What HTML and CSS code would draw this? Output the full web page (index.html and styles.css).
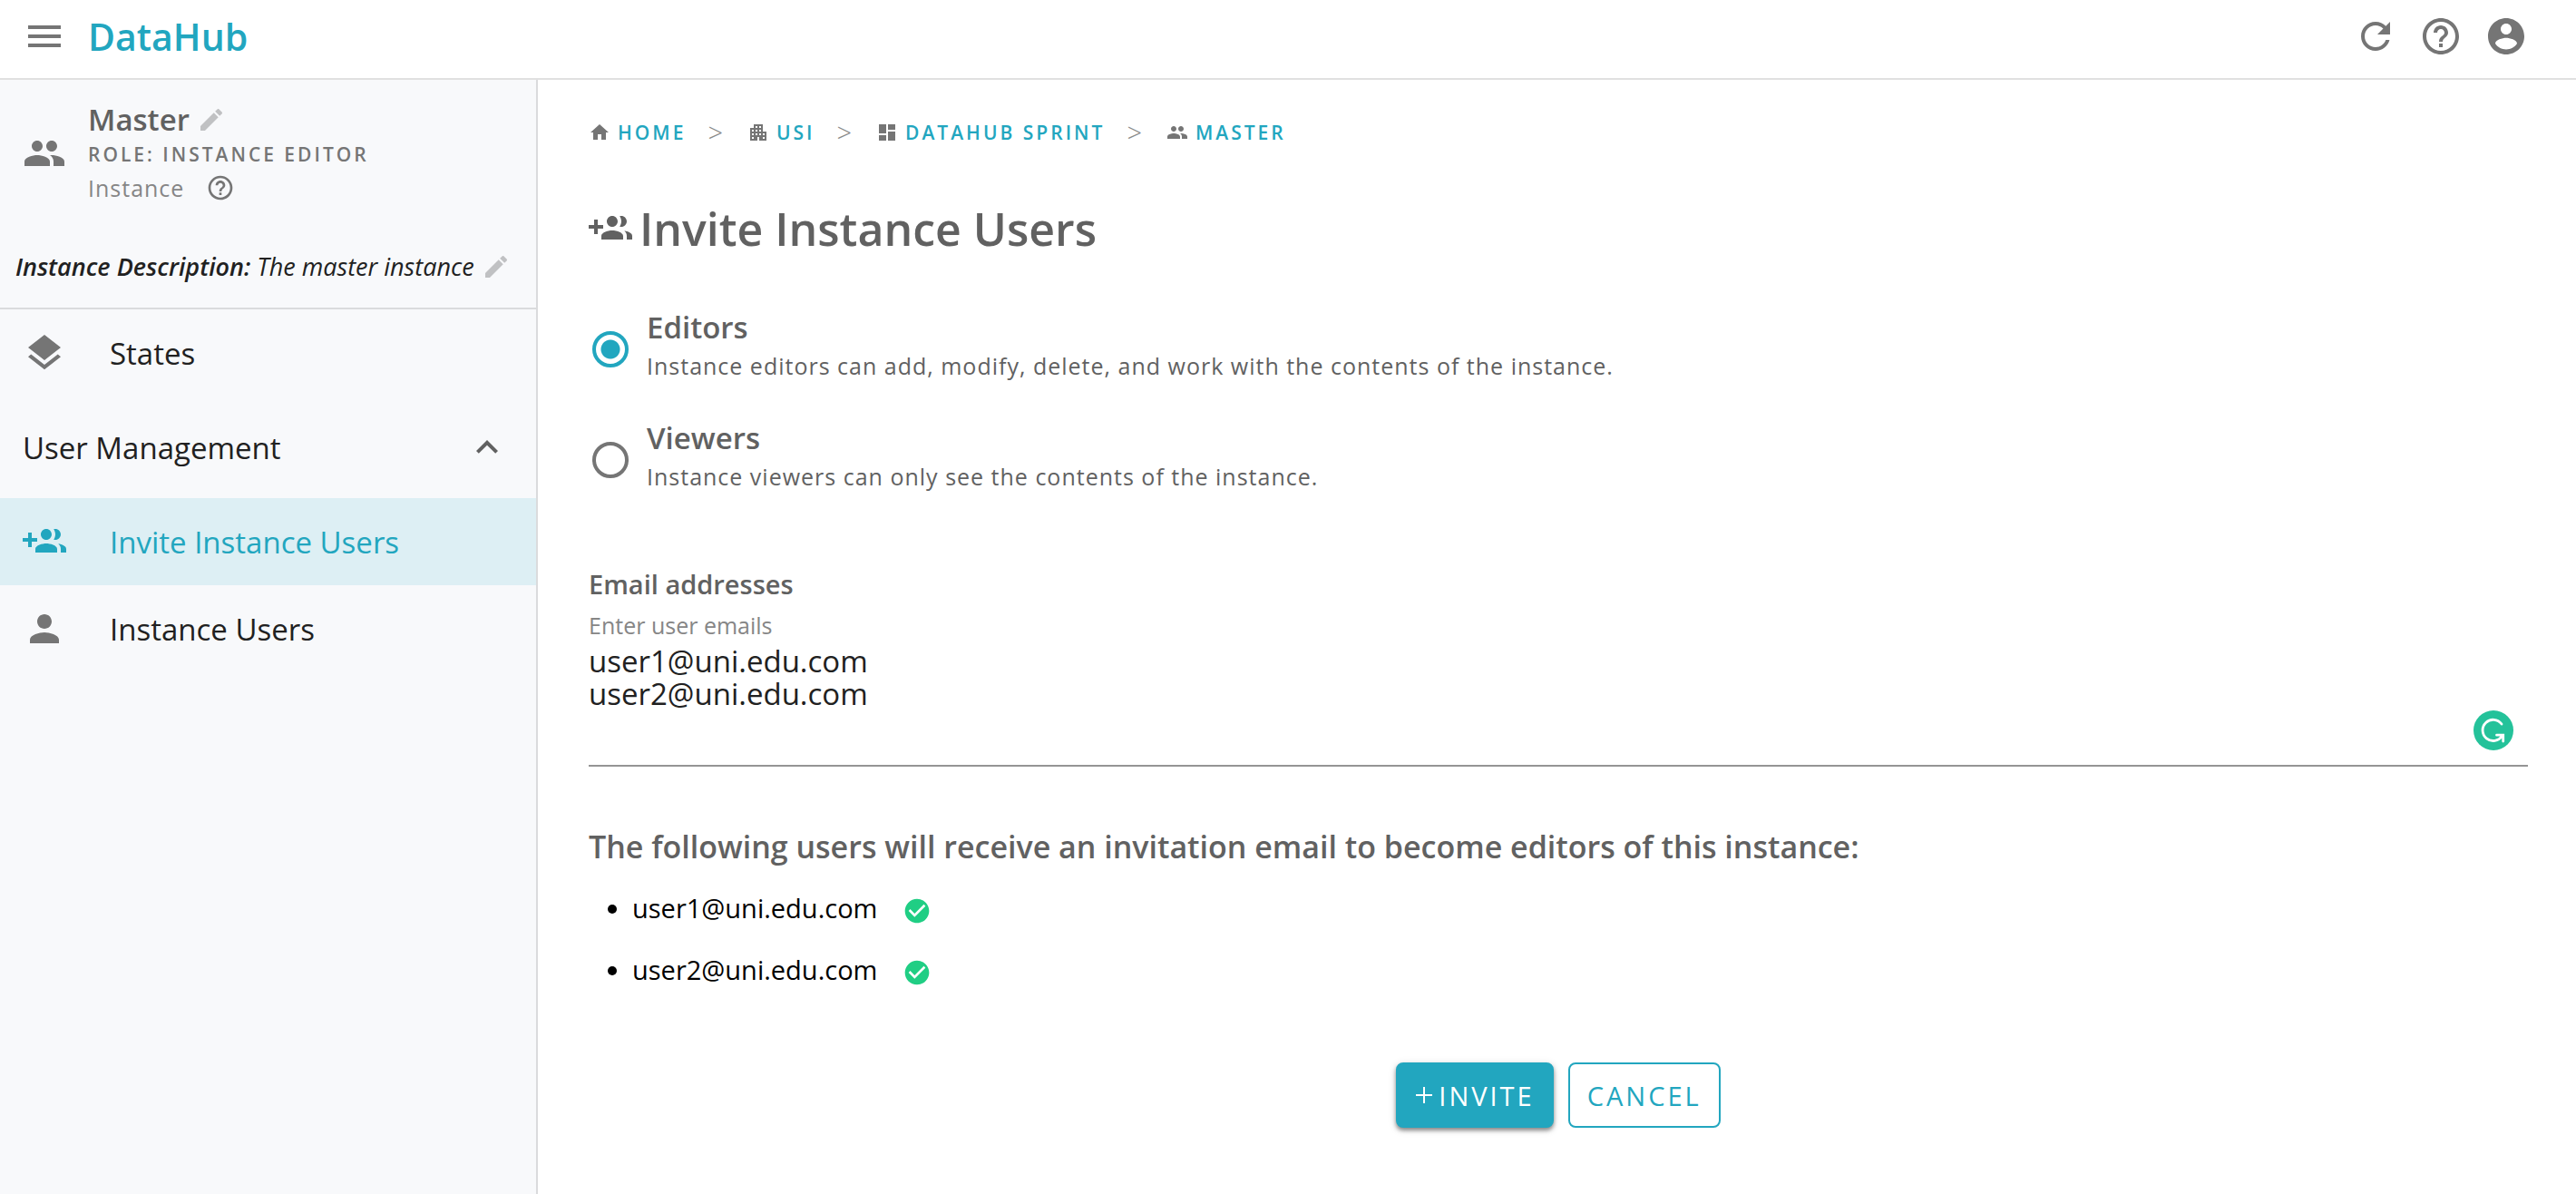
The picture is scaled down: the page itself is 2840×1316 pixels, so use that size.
FILE: index.html
```html
<!DOCTYPE html>
<html lang="en">
<head>
<meta charset="utf-8">
<title>DataHub – Invite Instance Users</title>
<link rel="stylesheet" href="styles.css">
</head>
<body>
<svg class="sprite" aria-hidden="true">
  <symbol id="people" viewBox="0 0 24 24"><path d="M16 11c1.660 0 2.990-1.340 2.990-3S17.660 5 16 5s-3 1.340-3 3 1.340 3 3 3zm-8 0c1.660 0 2.990-1.340 2.990-3S9.660 5 8 5 5 6.340 5 8s1.340 3 3 3zm0 2c-2.330 0-7 1.170-7 3.500V19h14v-2.500c0-2.330-4.670-3.500-7-3.500zm8 0c-.290 0-.620.020-.970.050 1.160.840 1.970 1.970 1.970 3.450V19h6v-2.500c0-2.330-4.670-3.500-7-3.500z"/></symbol>
  <symbol id="pencil" viewBox="0 0 24 24"><path d="M3 17.250V21h3.750L17.810 9.940l-3.750-3.750L3 17.250zM20.710 7.040c.390-.390.390-1.020 0-1.410l-2.340-2.340c-.390-.390-1.020-.390-1.410 0l-1.830 1.830 3.750 3.750 1.830-1.830z"/></symbol>
  <symbol id="help" viewBox="0 0 24 24"><path d="M11 18h2v-2h-2v2zm1-16C6.480 2 2 6.480 2 12s4.480 10 10 10 10-4.480 10-10S17.520 2 12 2zm0 18c-4.410 0-8-3.590-8-8s3.590-8 8-8 8 3.590 8 8-3.590 8-8 8zm0-14c-2.210 0-4 1.790-4 4h2c0-1.100.900-2 2-2s2 .900 2 2c0 2-3 1.750-3 5h2c0-2.250 3-2.500 3-5 0-2.210-1.790-4-4-4z"/></symbol>
  <symbol id="group-add" viewBox="0 0 24 24"><path d="M8 10H5V7H3v3H0v2h3v3h2v-3h3v-2zm10 1c1.660 0 2.990-1.340 2.990-3S19.660 5 18 5c-.320 0-.630.050-.910.140.570.810.900 1.790.900 2.860s-.340 2.040-.900 2.860c.280.090.590.140.910.140zm-5 0c1.660 0 2.990-1.340 2.990-3S14.660 5 13 5s-3 1.340-3 3 1.340 3 3 3zm6.620 2.160c.830.730 1.380 1.660 1.380 2.840v2h3v-2c0-1.540-2.370-2.490-4.380-2.840zM13 13c-2 0-6 1-6 3v2h12v-2c0-2-4-3-6-3z"/></symbol>
  <symbol id="check" viewBox="0 0 24 24"><path d="M12 2C6.480 2 2 6.480 2 12s4.480 10 10 10 10-4.480 10-10S17.520 2 12 2zm-2 15l-5-5 1.410-1.410L10 14.170l7.590-7.590L19 8l-9 9z"/></symbol>
</svg>

<header class="topbar">
  <button class="icon-button" type="button" aria-label="Menu"><svg class="icon" viewBox="0 0 24 24"><path d="M3 18h18v-2H3v2zm0-5h18v-2H3v2zm0-7v2h18V6H3z"/></svg></button>
  <a class="brand" href="#">DataHub</a>
  <div class="actions">
    <button class="icon-button" type="button" aria-label="Refresh"><svg class="icon" viewBox="0 0 24 24"><path d="M17.650 6.350C16.200 4.900 14.210 4 12 4c-4.420 0-7.990 3.580-7.990 8s3.570 8 7.990 8c3.730 0 6.840-2.550 7.730-6h-2.080c-.820 2.330-3.040 4-5.650 4-3.310 0-6-2.690-6-6s2.690-6 6-6c1.660 0 3.140.690 4.220 1.780L13 11h7V4l-2.350 2.350z"/></svg></button>
    <button class="icon-button" type="button" aria-label="Help"><svg class="icon"><use href="#help"/></svg></button>
    <button class="icon-button" type="button" aria-label="Account"><svg class="icon" viewBox="0 0 24 24"><path d="M12 2C6.480 2 2 6.480 2 12s4.480 10 10 10 10-4.480 10-10S17.520 2 12 2zm0 3c1.660 0 3 1.340 3 3s-1.340 3-3 3-3-1.340-3-3 1.340-3 3-3zm0 14.200c-2.500 0-4.710-1.280-6-3.220.030-1.990 4-3.080 6-3.080 1.990 0 5.970 1.090 6 3.080-1.290 1.940-3.500 3.220-6 3.220z"/></svg></button>
  </div>
</header>

<div class="shell">
  <aside class="sidebar">
    <section class="profile">
      <svg class="icon"><use href="#people"/></svg>
      <div class="profile-text">
        <div class="profile-name"><strong>Master</strong><button class="icon-button faint" type="button" aria-label="Edit name"><svg class="icon small"><use href="#pencil"/></svg></button></div>
        <div class="profile-role">ROLE: INSTANCE EDITOR</div>
        <div class="profile-kind"><span>Instance</span><button class="icon-button" type="button" aria-label="About instances"><svg class="icon small"><use href="#help"/></svg></button></div>
      </div>
    </section>
    <div class="description">
      <p><b>Instance Description:</b> The master instance</p>
      <button class="icon-button faint" type="button" aria-label="Edit description"><svg class="icon small"><use href="#pencil"/></svg></button>
    </div>
    <nav class="menu">
      <a class="menu-item" href="#"><svg class="icon" viewBox="0 0 24 24"><path d="M11.990 18.540l-7.370-5.730L3 14.070l9 7 9-7-1.630-1.270-7.380 5.740zM12 16l7.360-5.730L21 9l-9-7-9 7 1.630 1.270L12 16z"/></svg>States</a>
      <button class="menu-group" type="button" aria-expanded="true">User Management<svg class="icon" viewBox="0 0 24 24"><path d="M12 8l-6 6 1.410 1.410L12 10.830l4.590 4.580L18 14z"/></svg></button>
      <a class="menu-item active" href="#" aria-current="page"><svg class="icon"><use href="#group-add"/></svg>Invite Instance Users</a>
      <a class="menu-item" href="#"><svg class="icon" viewBox="0 0 24 24"><path d="M12 12c2.210 0 4-1.790 4-4s-1.790-4-4-4-4 1.790-4 4 1.790 4 4 4zm0 2c-2.670 0-8 1.340-8 4v2h16v-2c0-2.660-5.330-4-8-4z"/></svg>Instance Users</a>
    </nav>
  </aside>

  <main class="content">
    <nav class="crumbs" aria-label="Breadcrumb">
      <a href="#"><svg class="icon tiny" viewBox="0 0 24 24"><path d="M10 20v-6h4v6h5v-8h3L12 3 2 12h3v8z"/></svg>HOME</a>
      <span class="sep">&gt;</span>
      <a href="#"><svg class="icon tiny" viewBox="0 0 24 24"><path fill-rule="evenodd" d="M17 11V3H7v4H3v14h8v-4h2v4h8V11h-4zM7 19H5v-2h2v2zm0-4H5v-2h2v2zm0-4H5V9h2v2zm4 4H9v-2h2v2zm0-4H9V9h2v2zm0-4H9V5h2v2zm4 8h-2v-2h2v2zm0-4h-2V9h2v2zm0-4h-2V5h2v2zm4 12h-2v-2h2v2zm0-4h-2v-2h2v2z"/></svg>USI</a>
      <span class="sep">&gt;</span>
      <a href="#"><svg class="icon tiny" viewBox="0 0 24 24"><path d="M3 13h8V3H3v10zm0 8h8v-6H3v6zm10 0h8V11h-8v10zm0-18v6h8V3h-8z"/></svg>DATAHUB SPRINT</a>
      <span class="sep">&gt;</span>
      <a href="#"><svg class="icon tiny"><use href="#people"/></svg>MASTER</a>
    </nav>

    <h1 class="title"><svg class="icon"><use href="#group-add"/></svg>Invite Instance Users</h1>

    <form class="invite-form">
      <div class="roles" role="radiogroup" aria-label="Role">
        <label class="role">
          <input type="radio" name="role" value="editor" checked>
          <span class="role-text"><strong>Editors</strong><span>Instance editors can add, modify, delete, and work with the contents of the instance.</span></span>
        </label>
        <label class="role">
          <input type="radio" name="role" value="viewer">
          <span class="role-text"><strong>Viewers</strong><span>Instance viewers can only see the contents of the instance.</span></span>
        </label>
      </div>

      <h2 class="field-title">Email addresses</h2>
      <div class="field">
        <label for="emails">Enter user emails</label>
        <textarea id="emails" rows="3" spellcheck="false">user1@uni.edu.com
user2@uni.edu.com</textarea>
        <svg class="assistant" viewBox="0 0 44 44"><circle cx="22" cy="22" r="22" fill="#24c29a"/><path d="M31 15A11.600 11.600 0 1 0 31.500 28M25.500 27.200H32.700V34" fill="none" stroke="#fff" stroke-width="2.800" stroke-linecap="round"/></svg>
      </div>

      <h2 class="summary">The following users will receive an invitation email to become editors of this instance:</h2>
      <ul class="recipients">
        <li>user1@uni.edu.com<svg class="icon small ok"><use href="#check"/></svg></li>
        <li>user2@uni.edu.com<svg class="icon small ok"><use href="#check"/></svg></li>
      </ul>

      <div class="buttons">
        <button class="button primary" type="button"><svg viewBox="0 0 20 20"><path d="M10 1v18M1 10h18" stroke="currentColor" stroke-width="2"/></svg>INVITE</button>
        <button class="button outline" type="button">CANCEL</button>
      </div>
    </form>
  </main>
</div>
</body>
</html>
```
FILE: styles.css
```css
:root {
  --accent: #22a6bf;
  --icon: #757575;
  --heading: #616161;
  --text: #212121;
  --line: #dadbdd;
}

* { box-sizing: border-box; }

body {
  margin: 0;
  min-height: 100vh;
  display: flex;
  flex-direction: column;
  background: #fff;
  color: var(--text);
  font-family: "Open Sans", "Noto Sans", sans-serif;
  font-size: 33px;
  font-weight: 400;
}

h1, h2, p, ul { margin: 0; }
strong, b, h1, h2 { font-weight: 600; }
a { color: inherit; text-decoration: none; }

button {
  padding: 0;
  border: 0;
  background: none;
  color: inherit;
  font: inherit;
  cursor: pointer;
}

.sprite { display: none; }

.icon {
  flex: none;
  display: block;
  width: 48px;
  height: 48px;
  fill: currentColor;
}
.icon.small { width: 32px; height: 32px; }
.icon.tiny { width: 24px; height: 24px; }
.icon-button { color: var(--icon); }
.faint { color: #c0c1c3; }

/* Top bar */
.topbar {
  display: flex;
  align-items: center;
  height: 88px;
  padding: 0 53px 6px 25px;
  border-bottom: 2px solid #e0e0e0;
}
.brand {
  margin-left: 24px;
  color: var(--accent);
  font-size: 41px;
  font-weight: 600;
  line-height: 48px;
}
.actions {
  display: flex;
  gap: 24px;
  margin-left: auto;
}

.shell { flex: 1; display: flex; }

/* Sidebar */
.sidebar {
  flex: none;
  width: 593px;
  border-right: 2px solid var(--line);
  background: #f8f9fb;
}
.profile {
  display: flex;
  align-items: center;
  gap: 24px;
  padding: 25px 24px 0 25px;
  color: var(--icon);
}
.profile-name {
  display: flex;
  align-items: center;
  gap: 8px;
  color: var(--heading);
  line-height: 38px;
}
.profile-role {
  font-size: 21px;
  font-weight: 600;
  line-height: 38px;
  letter-spacing: 3px;
}
.profile-kind {
  display: flex;
  align-items: center;
  gap: 24px;
  color: #868686;
  font-size: 25px;
  line-height: 36px;
  letter-spacing: 1px;
}
.description {
  display: flex;
  align-items: center;
  gap: 8px;
  padding: 52px 18px 28px 17px;
  border-bottom: 2px solid var(--line);
  font-size: 27px;
  font-style: italic;
  line-height: 34px;
}
.menu-item, .menu-group {
  display: flex;
  align-items: center;
  width: 100%;
  height: 96px;
  padding: 0 30px 0 25px;
}
.menu-item { gap: 48px; }
.menu-item .icon { color: var(--icon); }
.menu-group {
  justify-content: space-between;
  height: 112px;
}
.menu-group .icon { color: var(--heading); }
.menu-item.active { background: #ddeff4; }
.menu-item.active, .menu-item.active .icon { color: var(--accent); }

/* Main column */
.content {
  flex: 1;
  min-width: 0;
  padding: 40px 53px 72px 56px;
}
.crumbs {
  display: flex;
  align-items: center;
  gap: 24px;
  font-size: 21px;
  font-weight: 600;
  line-height: 36px;
  letter-spacing: 3px;
}
.crumbs a {
  display: flex;
  align-items: center;
  gap: 8px;
  color: var(--accent);
}
.crumbs .icon { color: var(--icon); }
.sep {
  color: #8a8a8a;
  font-size: 29px;
  font-weight: 300;
}
.title {
  display: flex;
  align-items: center;
  gap: 8px;
  margin-top: 56px;
  color: var(--heading);
  font-size: 50px;
  line-height: 64px;
}

.roles { margin-top: 40px; }
.role {
  display: flex;
  align-items: center;
  gap: 20px;
  height: 122px;
  padding-left: 4px;
}
.role input {
  appearance: none;
  flex: none;
  width: 40px;
  height: 40px;
  margin: 0;
  border: 4px solid var(--icon);
  border-radius: 50%;
}
.role input:checked {
  border-color: var(--accent);
  background: radial-gradient(circle, var(--accent) 10px, transparent 11px);
}
.role-text {
  display: flex;
  flex-direction: column;
  padding-bottom: 8px;
  color: var(--heading);
  font-size: 25px;
  line-height: 40px;
  letter-spacing: 1px;
}
.role-text strong { font-size: 33px; letter-spacing: 0; line-height: 44px; }

.field-title {
  margin-top: 56px;
  color: var(--heading);
  font-size: 29px;
  line-height: 40px;
}
.field {
  position: relative;
  padding-top: 9px;
}
.field label {
  display: block;
  color: #868686;
  font-size: 25px;
  line-height: 32px;
}
.field textarea {
  display: block;
  width: 100%;
  height: 140px;
  padding: 6px 0 0;
  border: 0;
  border-bottom: 2px solid #949494;
  outline: 0;
  background: none;
  resize: none;
  color: var(--text);
  font: inherit;
  line-height: 36px;
}
.assistant {
  position: absolute;
  right: 16px;
  bottom: 18px;
  width: 44px;
  height: 44px;
}

.summary {
  margin-top: 66px;
  color: var(--heading);
  font-size: 34px;
  line-height: 44px;
}
.recipients {
  margin-top: 12px;
  padding: 0 0 0 48px;
  color: #000;
  font-size: 29px;
  line-height: 68px;
}
.recipients .icon {
  display: inline-block;
  margin-left: 28px;
  vertical-align: middle;
}
.ok { color: #20ce84; }

.buttons {
  display: flex;
  justify-content: center;
  gap: 16px;
  margin-top: 68px;
}
.button {
  display: flex;
  align-items: center;
  gap: 6px;
  height: 72px;
  padding: 0 19px;
  border: 2px solid var(--accent);
  border-radius: 8px;
  color: var(--accent);
  font-size: 29px;
  font-weight: 400;
  letter-spacing: 3px;
}
.button svg { width: 20px; height: 20px; }
.primary {
  background: var(--accent);
  color: #fff;
  box-shadow: 0 3px 4px rgba(0, 0, 0, .4), 0 2px 10px rgba(0, 0, 0, .15);
}
```
